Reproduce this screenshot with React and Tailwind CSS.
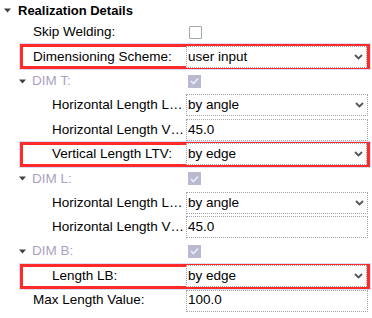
import React from 'react';

const font = { fontFamily: '"Liberation Sans", Arial, sans-serif' };

function Caret({ className = '' }) {
    return (
        <svg width="7" height="5" viewBox="0 0 7 5" className={className}>
            <path d="M0 0.5 L7 0.5 L3.5 4.5 Z" fill="#404040" />
        </svg>
    );
}

function Chevron() {
    return (
        <svg width="9" height="6" viewBox="0 0 9 6" className="mr-[3px]">
            <path d="M1 1 L4.5 4.5 L8 1" stroke="#555" strokeWidth="1.8" fill="none" />
        </svg>
    );
}

function Box({ value, select }) {
    return (
        <div className="flex h-[22px] flex-1 items-center justify-between border border-dotted border-[#a4a4a4] bg-white pl-[1px]">
            <span className="text-[13.5px] text-black">{value}</span>
            {select && <Chevron />}
        </div>
    );
}

function Checkbox({ checked }) {
    if (checked) {
        return (
            <div className="flex h-[13px] w-[13px] items-center justify-center bg-[#b9b9cf]">
                <svg width="9" height="8" viewBox="0 0 9 8">
                    <path d="M1 4 L3.5 6.5 L8 1.5" stroke="#eef" strokeWidth="1.6" fill="none" />
                </svg>
            </div>
        );
    }
    return <div className="h-[13px] w-[13px] rounded-[1px] border border-[#9fa9a9] bg-white" />;
}

// label + value row; highlight wraps it in the red frame
function Row({ label, indent = 33, children, highlight }) {
    const inner = (
        <>
            <div
                className="flex h-full shrink-0 items-center overflow-hidden whitespace-nowrap text-[13.5px] text-black"
                style={{ width: highlight ? 163 : 186, paddingLeft: highlight ? indent - 23 : indent }}
            >
                {label}
            </div>
            <div className="flex h-full flex-1 items-center">{children}</div>
        </>
    );
    if (highlight) {
        return (
            <div className="ml-[20px] mr-[2px] flex h-[25px] items-center border-[3px] border-[#ff2a2a] shadow-[0_0_0_1px_#dcdcf4]">
                {inner}
            </div>
        );
    }
    return <div className="mr-[4px] flex h-[24.2px] items-center">{inner}</div>;
}

function Group({ label }) {
    return (
        <div className="flex h-[24.2px] items-center">
            <div className="flex w-[186px] items-center gap-[6px] pl-[19px]">
                <Caret />
                <span className="text-[13.5px] text-[#ab9fc2]">{label}</span>
            </div>
            <div className="flex items-center pl-[2px]">
                <Checkbox checked />
            </div>
        </div>
    );
}

export default function App() {
    return (
        <div className="h-[318px] w-[372px] overflow-hidden bg-white" style={font}>
            <div className="flex h-[20px] items-center gap-[7px] pl-[4px] pt-[1px]">
                <Caret />
                <span className="text-[13px] font-bold text-black">Realization Details</span>
            </div>
            <Row label="Skip Welding:">
                <div className="pl-[3px]">
                    <Checkbox />
                </div>
            </Row>
            <Row label="Dimensioning Scheme:" highlight>
                <Box value="user input" select />
            </Row>
            <Group label="DIM T:" />
            <Row label="Horizontal Length L…" indent={52}>
                <Box value="by angle" select />
            </Row>
            <Row label="Horizontal Length V…" indent={52}>
                <Box value="45.0" />
            </Row>
            <Row label="Vertical Length LTV:" indent={52} highlight>
                <Box value="by edge" select />
            </Row>
            <Group label="DIM L:" />
            <Row label="Horizontal Length L…" indent={52}>
                <Box value="by angle" select />
            </Row>
            <Row label="Horizontal Length V…" indent={52}>
                <Box value="45.0" />
            </Row>
            <Group label="DIM B:" />
            <Row label="Length LB:" indent={52} highlight>
                <Box value="by edge" select />
            </Row>
            <Row label="Max Length Value:">
                <Box value="100.0" />
            </Row>
        </div>
    );
}
